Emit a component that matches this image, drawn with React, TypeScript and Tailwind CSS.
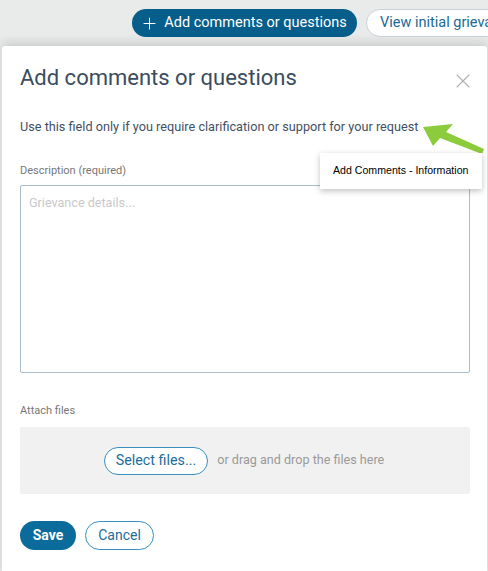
import { X, Plus } from "lucide-react";

export default function App() {
  return (
    <div className="relative h-[571px] w-[488px] overflow-hidden bg-[#e9eaea] font-['Roboto',sans-serif]">
      {/* toolbar */}
      <div className="flex h-[46px] items-start gap-[9px] whitespace-nowrap pl-[132px] pt-[9px]">
        <button className="flex h-[28px] w-[225px] shrink-0 items-center justify-center gap-[5px] rounded-full bg-[#075e8a] pr-[2px] text-[14.5px] text-white">
          <Plus size={19} strokeWidth={1.3} />
          Add comments or questions
        </button>
        <button className="flex h-[28px] shrink-0 items-center rounded-full border border-[#c9d3da] bg-white pl-[13px] pr-4 text-[14.5px] text-[#1b6a96]">
          View initial grievance
        </button>
      </div>

      {/* modal */}
      <div className="relative ml-[2px] mr-[1px] h-[530px] rounded-[3px] bg-white pl-[18px] pr-[17px] pt-[15px] shadow-[0_-4px_10px_rgba(0,0,0,0.12)]">
        <div className="flex items-start justify-between">
          <h2 className="text-[22px] leading-[34px] text-[#3a4c60]">Add comments or questions</h2>
          <X size={24} strokeWidth={1.1} className="mr-[-5px] mt-[8px] text-[#b0b0b0]" />
        </div>

        <p className="mt-[23px] text-[12.7px] leading-[18px] text-[#3f5064]">
          Use this field only if you require clarification or support for your request
        </p>

        <label className="mt-[28px] block text-[11px] leading-[14px] text-[#777]">Description (required)</label>
        <div className="mt-[7px] h-[188px] rounded-[2px] border border-[#aabdcc] px-[8px] pt-[8px] text-[12.6px] text-[#c9c9c9]">
          Grievance details...
        </div>

        <label className="mt-[31px] block text-[11px] leading-[14px] text-[#777]">Attach files</label>
        <div className="mt-[9px] flex h-[67px] items-center justify-center gap-[9px] rounded-[2px] bg-[#f1f1f1] pr-[2px]">
          <button className="h-[28px] rounded-full border border-[#3a8fbf] bg-white px-[11px] text-[14.3px] text-[#1c6d9d]">
            Select files...
          </button>
          <span className="text-[12.6px] text-[#9a9a9a]">or drag and drop the files here</span>
        </div>

        <div className="mt-[27px] flex gap-[9px]">
          <button className="h-[29px] w-[56px] rounded-full bg-[#0b6c9c] text-[14px] font-bold text-white">Save</button>
          <button className="h-[29px] w-[69px] rounded-full border border-[#3a8fbf] text-[14px] text-[#1c6d9d]">Cancel</button>
        </div>

        {/* annotation */}
        <svg className="absolute left-[418px] top-[78px]" width="70" height="32" viewBox="0 0 70 32">
          <polygon points="3,3 33,0 26,8 64,25 62,30 20,14 13,22" fill="#8ccb3c" />
        </svg>
        <div className="absolute left-[318px] top-[107px] flex h-[36px] w-[162px] items-center bg-white pl-[13px] font-['Liberation_Sans',Arial,sans-serif] text-[10.6px] text-black shadow-[0_2px_6px_rgba(0,0,0,0.25)]">
          Add Comments - Information
        </div>
      </div>
    </div>
  );
}
